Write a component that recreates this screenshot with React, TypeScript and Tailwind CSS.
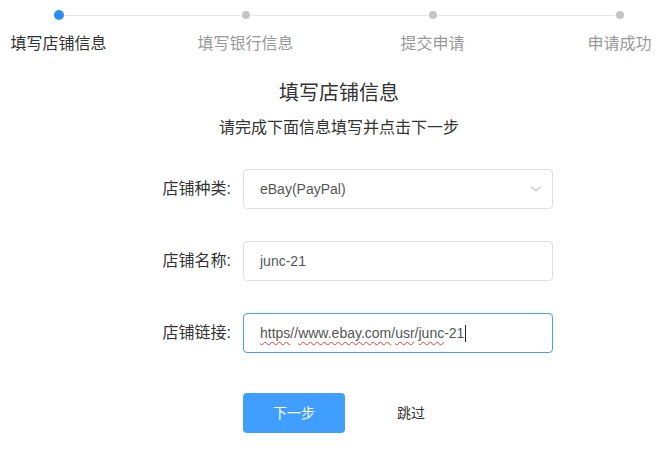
import React from 'react';

const steps = ['填写店铺信息', '填写银行信息', '提交申请', '申请成功'];

const Stepper = () => (
  <div className="flex ml-[-35px] pt-[10px]">
    {steps.map((s, i) => (
      <div key={s} className="w-[187px] shrink-0 flex flex-col items-center">
        <div className="w-full flex items-center h-[10px]">
          <div className={`flex-1 h-px ${i === 0 ? 'bg-transparent' : 'bg-[#e6e6e6]'}`}></div>
          {i === 0 ? (
            <div className="w-[10px] h-[10px] rounded-full bg-[#2a8df0]"></div>
          ) : (
            <div className="w-[8px] h-[8px] mx-px rounded-full bg-[#c4c4c4]"></div>
          )}
          <div className={`flex-1 h-px ${i === steps.length - 1 ? 'bg-transparent' : 'bg-[#e6e6e6]'}`}></div>
        </div>
        <div className={`mt-[15px] text-[16px] leading-[18px] ${i === 0 ? 'text-[#333]' : 'text-[#999]'}`}>{s}</div>
      </div>
    ))}
  </div>
);

const Row = ({ label, children }: { label: string; children: React.ReactNode }) => (
  <div className="flex items-center">
    <div className="w-[90px] text-right text-[16px] text-[#333] pr-[2px]">{label}</div>
    <div className="ml-[10px]">{children}</div>
  </div>
);

const Squiggle = ({ children }: { children: React.ReactNode }) => (
  <span className="underline decoration-wavy decoration-[#e53935] decoration-1 underline-offset-[3px]">{children}</span>
);

export default function App() {
  return (
    <div
      className="w-[664px] h-[450px] bg-white overflow-hidden"
      style={{ fontFamily: '"Liberation Sans", "Noto Sans CJK SC", sans-serif' }}
    >
      <Stepper />

      <div className="pl-[14px] text-center mt-[26px]">
        <div className="text-[20px] leading-[28px] text-[#333]">填写店铺信息</div>
        <div className="text-[16px] leading-[20px] text-[#333] mt-[11px]">请完成下面信息填写并点击下一步</div>
      </div>

      <div className="ml-[143px] mt-[31px] flex flex-col gap-[32px]">
        <Row label="店铺种类:">
          <div className="w-[310px] h-[40px] border border-[#dcdfe6] rounded-[4px] flex items-center justify-between pl-[16px] pr-[10px] text-[14px] text-[#555]">
            <span>eBay(PayPal)</span>
            <svg width="12" height="8" viewBox="0 0 12 8" fill="none" stroke="#c8c8c8" strokeWidth="1.3">
              <path d="M1 1.5 L6 6 L11 1.5" />
            </svg>
          </div>
        </Row>
        <Row label="店铺名称:">
          <div className="w-[310px] h-[40px] border border-[#dcdfe6] rounded-[4px] flex items-center pl-[16px] text-[14px] text-[#555]">
            junc-21
          </div>
        </Row>
        <Row label="店铺链接:">
          <div className="w-[310px] h-[40px] border border-[#4a9ef5] rounded-[4px] flex items-center pl-[16px] text-[14px] text-[#555]">
            <span>
              <Squiggle>https</Squiggle>//<Squiggle>www.ebay.com</Squiggle>/<Squiggle>usr</Squiggle>/<Squiggle>junc</Squiggle>-21
            </span>
            <span className="inline-block w-px h-[17px] bg-[#222] ml-px"></span>
          </div>
        </Row>
      </div>

      <div className="ml-[243px] mt-[40px] flex items-center">
        <button className="w-[102px] h-[40px] rounded-[4px] bg-[#409eff] text-white text-[14px]">下一步</button>
        <button className="ml-[52px] text-[14px] text-[#333]">跳过</button>
      </div>
    </div>
  );
}
